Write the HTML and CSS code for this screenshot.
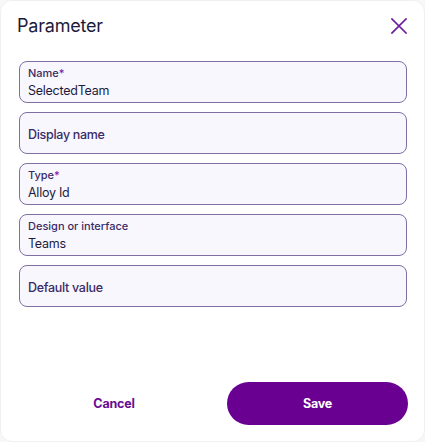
FILE: index.html
```html
<!DOCTYPE html>
<html lang="en">
<head>
<meta charset="utf-8">
<title>Parameter</title>
<link rel="stylesheet" href="styles.css">
</head>
<body>
<div class="dialog">
  <div class="header">
    <h1 class="title">Parameter</h1>
    <button class="close" aria-label="Close">
      <svg width="16" height="16" viewBox="0 0 16 16"><path d="M1 1 L15 15 M15 1 L1 15" stroke="#6e1a9c" stroke-width="1.7" stroke-linecap="square" fill="none"/></svg>
    </button>
  </div>
  <div class="fields">
    <div class="field">
      <span class="label">Name<span class="req">*</span></span>
      <span class="value">SelectedTeam</span>
    </div>
    <div class="field">
      <span class="placeholder">Display name</span>
    </div>
    <div class="field">
      <span class="label">Type<span class="req">*</span></span>
      <span class="value">Alloy Id</span>
    </div>
    <div class="field">
      <span class="label">Design or interface</span>
      <span class="value">Teams</span>
    </div>
    <div class="field">
      <span class="placeholder">Default value</span>
    </div>
  </div>
  <div class="actions">
    <button class="btn cancel">Cancel</button>
    <button class="btn save">Save</button>
  </div>
</div>
</body>
</html>
```
FILE: styles.css
```css
* { box-sizing: border-box; }
html, body { margin: 0; padding: 0; background: #f7f7f8; }
body { font-family: Inter, "Noto Sans", sans-serif; }
.dialog {
  width: 425px;
  height: 442px;
  background: #fff;
  border-radius: 12px;
  border: 1px solid #f0eff3;
  display: flex;
  flex-direction: column;
  padding: 13px 16px 16px 18px;
}
.header {
  display: flex;
  align-items: center;
  justify-content: space-between;
  height: 24px;
}
.title {
  margin: 0 0 0 -2px;
  font-size: 18px;
  font-weight: 400;
  line-height: 24px;
  letter-spacing: -0.2px;
  color: #1d1b3b;
}
.close {
  border: 0;
  background: none;
  padding: 0;
  width: 16px;
  height: 16px;
  display: flex;
  margin-right: 1px;
}
.fields {
  margin-top: 23px;
  display: flex;
  flex-direction: column;
  gap: 9px;
}
.field {
  height: 42px;
  width: 388px;
  border: 1.5px solid #7f6fa3;
  border-radius: 8px;
  background: #f8f7fe;
  padding: 2px 8px 0;
  display: flex;
  flex-direction: column;
  justify-content: center;
}
.label {
  font-size: 11px;
  line-height: 14px;
  font-weight: 500;
  color: #3a2b66;
}
.req { color: #7a1aa8; }
.value {
  margin-top: 2px;
  font-size: 12.5px;
  line-height: 18px;
  letter-spacing: -0.25px;
  color: #1d1b3b;
}
.placeholder {
  margin-top: 2px;
  font-size: 12.5px;
  line-height: 18px;
  font-weight: 500;
  letter-spacing: -0.3px;
  color: #3a2b66;
}
.actions {
  margin-top: auto;
  display: grid;
  grid-template-columns: 1fr 181px;
  gap: 19px;
  padding-left: 1px;
}
.btn {
  height: 43px;
  border: 0;
  border-radius: 22px;
  font-family: Inter, "Noto Sans", sans-serif;
  font-size: 12.5px;
  font-weight: 700;
  letter-spacing: -0.2px;
  cursor: pointer;
}
.cancel { background: none; color: #6a0d91; }
.save { background: #6a0091; color: #fff; }
```
